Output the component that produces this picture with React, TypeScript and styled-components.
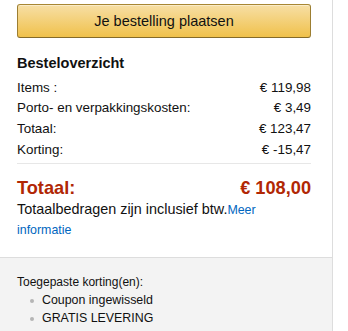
import React from "react";
import styled, { createGlobalStyle } from "styled-components";

const Global = createGlobalStyle`
  html, body { margin: 0; padding: 0; background: #fff; }
  body {
    font-family: Arial, "Liberation Sans", sans-serif;
    color: #111;
    -webkit-font-smoothing: antialiased;
  }
`;

const Panel = styled.div`
  box-sizing: border-box;
  width: 333px;
  border-right: 1px solid #ddd;
  background: #fff;
`;

const Top = styled.div`
  padding: 4px 21px 17px 17px;
`;

const PlaceButton = styled.button`
  box-sizing: border-box;
  width: 100%;
  height: 34px;
  display: flex;
  align-items: center;
  justify-content: center;
  border: 1px solid;
  border-color: #a88734 #9c7e31 #846a29;
  border-radius: 3px;
  background: linear-gradient(to bottom, #f7dfa5, #f0c14b);
  box-shadow: inset 0 1px 0 rgba(255, 255, 255, 0.4);
  font-family: Arial, "Liberation Sans", sans-serif;
  font-size: 14.5px;
  color: #111;
  padding: 0 0 1px;
  cursor: pointer;
`;

const Title = styled.h5`
  margin: 15px 0 4.7px;
  font-size: 14.5px;
  line-height: 20px;
  font-weight: 700;
  color: #111;
`;

const Row = styled.div`
  display: flex;
  justify-content: space-between;
  font-size: 13.4px;
  line-height: 20.67px;
  color: #111;
`;

const Divider = styled.hr`
  border: 0;
  border-top: 1px solid #e7e7e7;
  margin: 3px 0 13px;
`;

const GrandTotal = styled.div`
  display: flex;
  justify-content: space-between;
  font-size: 18.2px;
  line-height: 23px;
  font-weight: 700;
  color: #b12704;
`;

const Note = styled.div`
  font-size: 14.4px;
  line-height: 19px;
  color: #111;
`;

const Link = styled.a`
  font-size: 12.4px;
  color: #0066c0;
  text-decoration: none;
`;

const Discounts = styled.div`
  border-top: 1px solid #ddd;
  background: #f3f3f3;
  padding: 15px 21px 12px 17px;
`;

const DiscountHead = styled.div`
  font-size: 12px;
  line-height: 18px;
  color: #111;
`;

const List = styled.ul`
  list-style: none;
  margin: 0;
  padding: 0 0 0 25px;
`;

const Item = styled.li`
  position: relative;
  font-size: 12.4px;
  line-height: 18px;
  color: #111;
  &::before {
    content: "";
    position: absolute;
    left: -12px;
    top: 8px;
    width: 4px;
    height: 4px;
    border-radius: 50%;
    background: #b5b5b5;
  }
`;

const rows: [string, string][] = [
  ["Items :", "€ 119,98"],
  ["Porto- en verpakkingskosten:", "€ 3,49"],
  ["Totaal:", "€ 123,47"],
  ["Korting:", "€ -15,47"],
];

export default function App() {
  return (
    <>
      <Global />
      <Panel>
        <Top>
          <PlaceButton>Je bestelling plaatsen</PlaceButton>
          <Title>Besteloverzicht</Title>
          {rows.map(([label, value]) => (
            <Row key={label}>
              <span>{label}</span>
              <span>{value}</span>
            </Row>
          ))}
          <Divider />
          <GrandTotal>
            <span>Totaal:</span>
            <span>€ 108,00</span>
          </GrandTotal>
          <Note>
            Totaalbedragen zijn inclusief btw.
            <Link href="#">Meer informatie</Link>
          </Note>
        </Top>
        <Discounts>
          <DiscountHead>Toegepaste korting(en):</DiscountHead>
          <List>
            <Item>Coupon ingewisseld</Item>
            <Item>GRATIS LEVERING</Item>
          </List>
        </Discounts>
      </Panel>
    </>
  );
}
